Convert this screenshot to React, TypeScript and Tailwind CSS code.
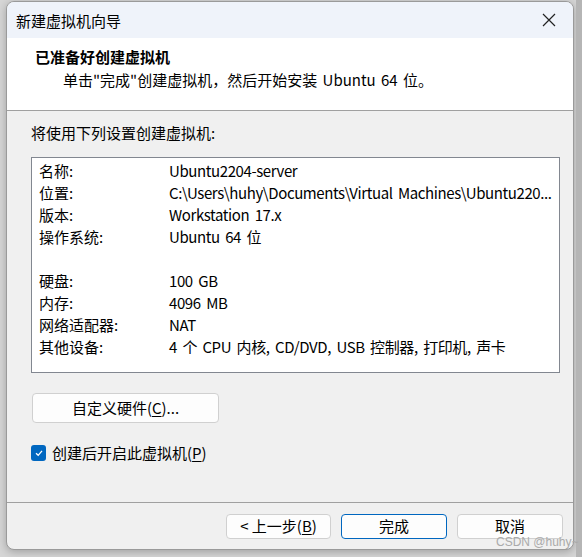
import React from "react";

const F = { fontFamily: '"Noto Sans CJK SC", "Noto Sans", sans-serif' };

function Row({ k, v }: { k: string; v: string }) {
  return (
    <div className="flex h-[22px] items-center">
      <div className="w-[130px] shrink-0">{k}</div>
      <div className="whitespace-nowrap tracking-[-0.4px] [word-spacing:2.5px]">{v}</div>
    </div>
  );
}

function Btn({ children, primary, className = "" }: { children: React.ReactNode; primary?: boolean; className?: string }) {
  return (
    <div
      className={
        "flex items-center justify-center rounded-[4px] bg-[#fdfdfd] text-[15px] text-black " +
        (primary ? "border border-[#0067c0] " : "border border-[#d0d0d0] ") +
        className
      }
    >
      {children}
    </div>
  );
}

export default function App() {
  return (
    <div
      className="relative flex h-[557px] w-[582px] overflow-hidden bg-[#d6d6d6] text-[15px] text-black"
      style={F}
    >
      <div className="ml-[6px] mt-[1px] flex h-[549px] w-[568px] shrink-0 flex-col overflow-hidden rounded-[8px] border border-[#9a9a9a] bg-[#f0f0f0] shadow-[0_2px_8px_rgba(0,0,0,0.25)]">
        {/* title bar */}
        <div className="flex h-[36px] shrink-0 items-center justify-between bg-[#eff3fa] pl-[9px] pr-[14px]">
          <span className="text-[15px] leading-none">新建虚拟机向导</span>
          <svg width="14" height="14" viewBox="0 0 14 14" className="mr-[3px]">
            <path d="M1 1 L13 13 M13 1 L1 13" stroke="#222" strokeWidth="1.2" fill="none" />
          </svg>
        </div>
        {/* header */}
        <div className="flex h-[73px] shrink-0 flex-col border-b border-[#a0a0a0] bg-white pl-[28px] pt-[8px]">
          <div className="h-[22px] text-[15px] font-bold leading-[22px]">已准备好创建虚拟机</div>
          <div className="ml-[28px] mt-[1px] h-[22px] leading-[22px] [word-spacing:2px]">
            单击"完成"创建虚拟机，然后开始安装 Ubuntu 64 位。
          </div>
        </div>
        {/* body */}
        <div className="flex flex-1 flex-col pl-[24px] pr-[13px]">
          <div className="mt-[11px] h-[22px] leading-[22px]">将使用下列设置创建虚拟机:</div>
          <div className="mt-[13px] flex h-[216px] w-[529px] flex-col border border-[#828790] bg-white pl-[7px] pt-[2px]">
            <Row k="名称:" v="Ubuntu2204-server" />
            <Row k="位置:" v="C:\Users\huhy\Documents\Virtual Machines\Ubuntu220..." />
            <Row k="版本:" v="Workstation 17.x" />
            <Row k="操作系统:" v="Ubuntu 64 位" />
            <div className="h-[22px]" />
            <Row k="硬盘:" v="100 GB" />
            <Row k="内存:" v="4096 MB" />
            <Row k="网络适配器:" v="NAT" />
            <Row k="其他设备:" v="4 个 CPU 内核, CD/DVD, USB 控制器, 打印机, 声卡" />
          </div>
          <Btn className="ml-[1px] mt-[20px] h-[30px] w-[187px]">
            自定义硬件(<span className="underline underline-offset-2">C</span>)...
          </Btn>
          <div className="mt-[19px] flex items-center gap-[6px]">
            <div className="flex h-[16px] w-[15px] items-center justify-center rounded-[3px] bg-[#0067c0]">
              <svg width="10" height="10" viewBox="0 0 10 10">
                <path d="M2 5.2 L4.2 7.3 L8 2.8" stroke="#fff" strokeWidth="1.3" fill="none" />
              </svg>
            </div>
            <span className="leading-[22px]">
              创建后开启此虚拟机(<span className="underline underline-offset-2">P</span>)
            </span>
          </div>
        </div>
        {/* footer */}
        <div className="flex h-[47px] shrink-0 justify-end gap-[10px] border-t border-[#a0a0a0] pr-[10px] pt-[11px]">
          <Btn className="h-[25px] w-[105px]">
            &lt; 上一步(<span className="underline underline-offset-2">B</span>)
          </Btn>
          <Btn primary className="h-[25px] w-[106px]">完成</Btn>
          <Btn className="h-[25px] w-[106px]">取消</Btn>
        </div>
      </div>
      {/* right edge of background window */}
      <div className="ml-[2px] flex-1 bg-[#b5b5b5]" />
      <div
        className="absolute left-[496px] top-[534px] whitespace-nowrap text-[12px] leading-[16px] text-[#aaaaaa]"
        style={{ fontFamily: '"Liberation Sans", sans-serif' }}
      >
        CSDN @huhy~
      </div>
    </div>
  );
}
